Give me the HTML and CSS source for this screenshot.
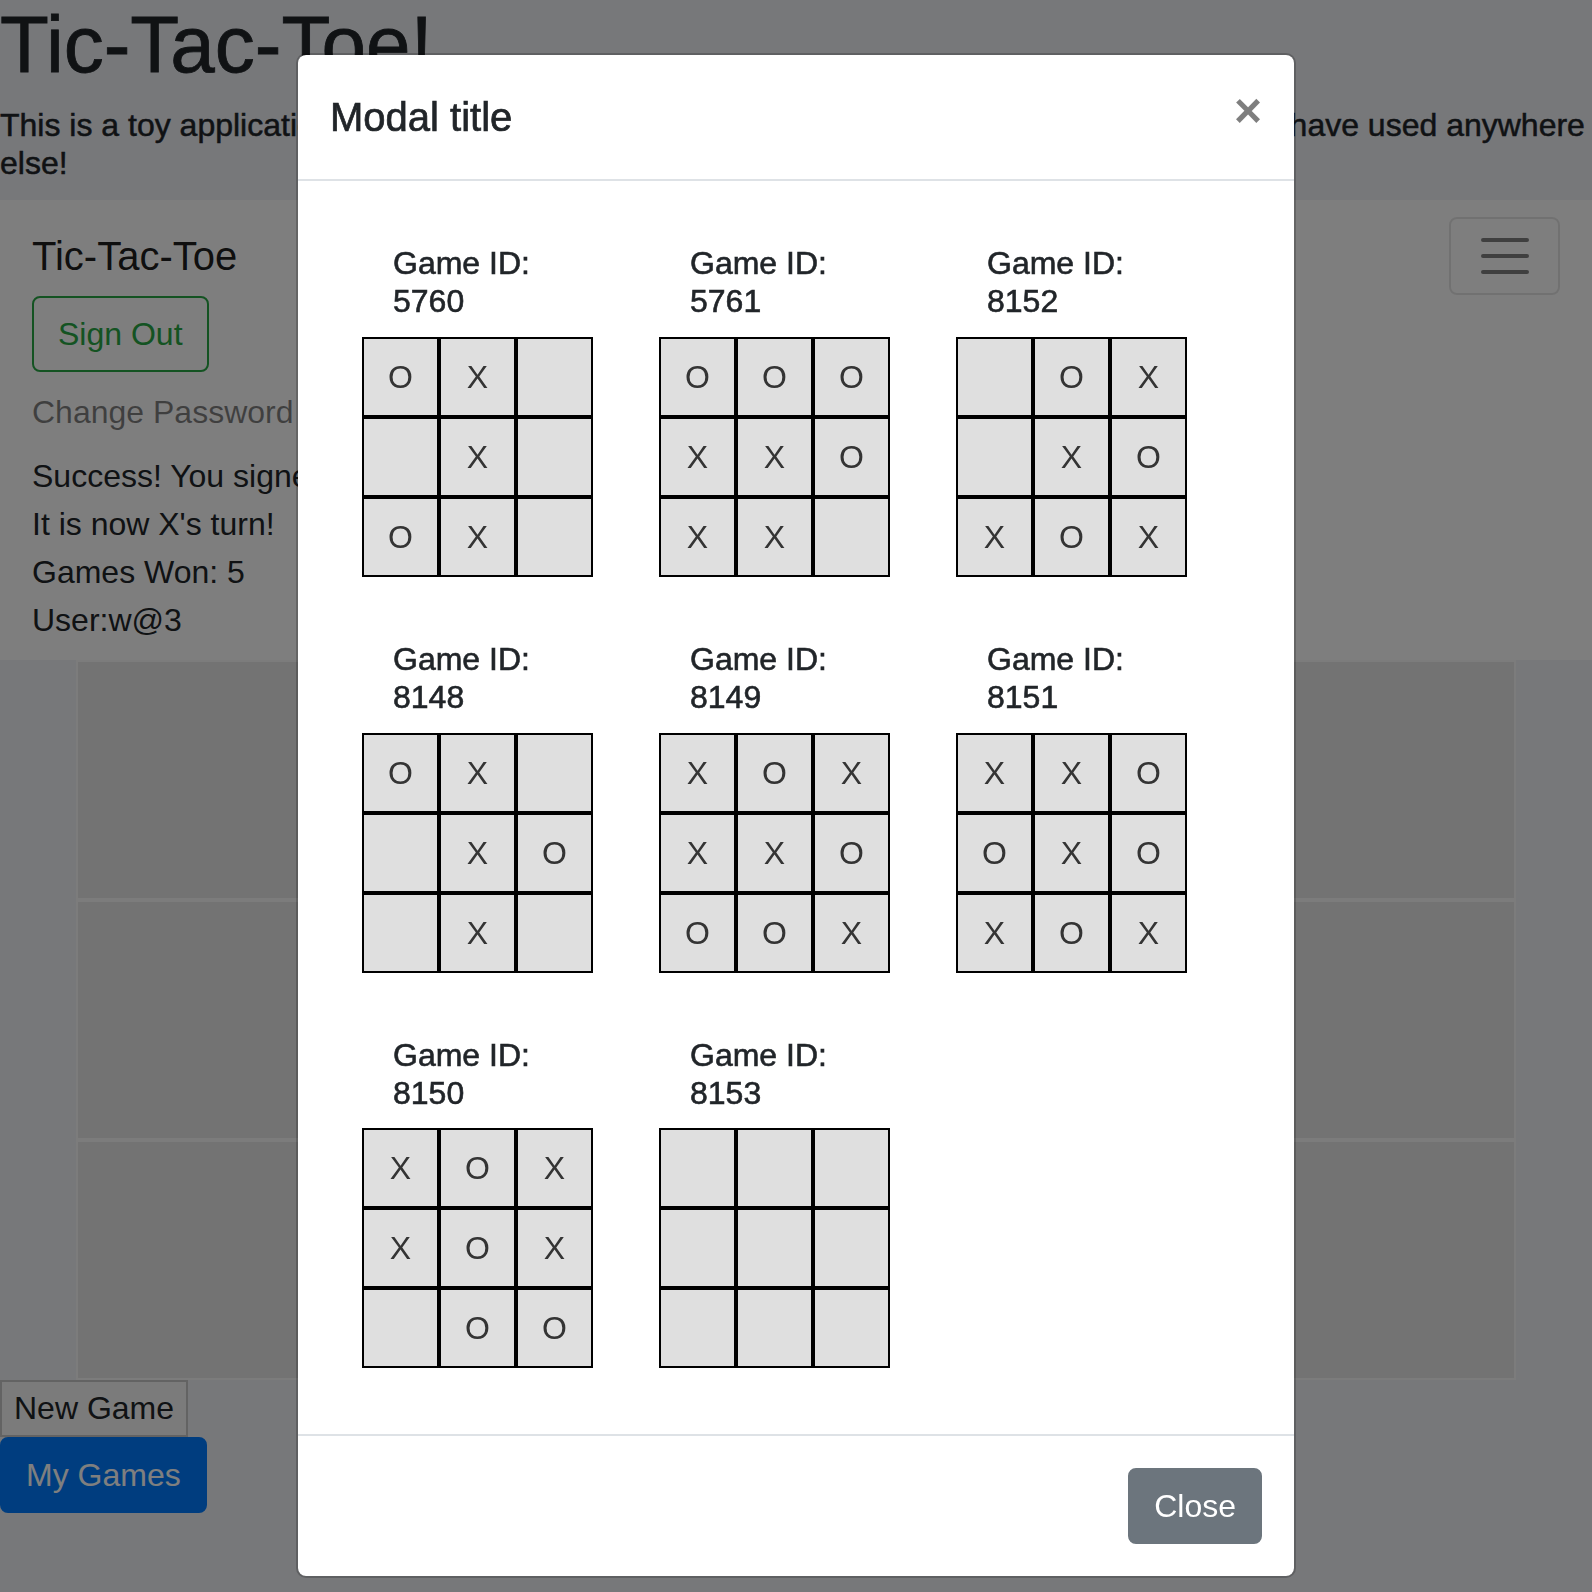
FILE: index.html
```html
<!DOCTYPE html>
<html lang="en">
<head>
<meta charset="utf-8">
<title>Tic-Tac-Toe</title>
<link rel="stylesheet" href="styles.css">
</head>
<body>
<div class="page">
  <header class="jumbotron">
    <h1 class="display-title">Tic-Tac-Toe!</h1>
    <h6 class="lead-text">This is a toy application made to practice web development skills and tools that I would not have used anywhere else!</h6>
  </header>

  <nav class="navbar">
    <div class="navbar-top">
      <span class="brand">Tic-Tac-Toe</span>
      <button class="toggler" type="button" aria-label="Toggle navigation">
        <svg class="toggler-icon" width="60" height="60" viewBox="0 0 30 30"><path d="M4 7h22M4 15h22M4 23h22" stroke="rgba(0,0,0,0.5)" stroke-width="2" stroke-linecap="round" fill="none"/></svg>
      </button>
    </div>
    <div class="navbar-collapse">
      <button class="btn btn-outline-success" type="button">Sign Out</button>
      <a class="nav-link">Change Password</a>
      <p class="status">Success! You signed in!</p>
      <p class="status">It is now X's turn!</p>
      <p class="status">Games Won: 5</p>
      <p class="status">User:w@3</p>
    </div>
  </nav>

  <div class="board">
    <div class="board-cell"></div><div class="board-cell"></div><div class="board-cell"></div>
    <div class="board-cell"></div><div class="board-cell"></div><div class="board-cell"></div>
    <div class="board-cell"></div><div class="board-cell"></div><div class="board-cell"></div>
  </div>

  <div class="actions">
    <button class="plain-btn" type="button">New Game</button>
    <button class="btn btn-primary" type="button">My Games</button>
  </div>
</div>

<div class="backdrop"></div>

<div class="modal">
  <div class="modal-dialog">
    <div class="modal-content">
      <div class="modal-header">
        <h5 class="modal-title">Modal title</h5>
        <button class="close" type="button" aria-label="Close">×</button>
      </div>
      <div class="modal-body">
        <div class="games">
          <div class="game">
            <h6 class="game-label">Game ID: 5760</h6>
            <div class="mini-board">
              <div class="mini-cell">O</div><div class="mini-cell">X</div><div class="mini-cell"></div>
              <div class="mini-cell"></div><div class="mini-cell">X</div><div class="mini-cell"></div>
              <div class="mini-cell">O</div><div class="mini-cell">X</div><div class="mini-cell"></div>
            </div>
          </div>
          <div class="game">
            <h6 class="game-label">Game ID: 5761</h6>
            <div class="mini-board">
              <div class="mini-cell">O</div><div class="mini-cell">O</div><div class="mini-cell">O</div>
              <div class="mini-cell">X</div><div class="mini-cell">X</div><div class="mini-cell">O</div>
              <div class="mini-cell">X</div><div class="mini-cell">X</div><div class="mini-cell"></div>
            </div>
          </div>
          <div class="game">
            <h6 class="game-label">Game ID: 8152</h6>
            <div class="mini-board">
              <div class="mini-cell"></div><div class="mini-cell">O</div><div class="mini-cell">X</div>
              <div class="mini-cell"></div><div class="mini-cell">X</div><div class="mini-cell">O</div>
              <div class="mini-cell">X</div><div class="mini-cell">O</div><div class="mini-cell">X</div>
            </div>
          </div>
          <div class="game">
            <h6 class="game-label">Game ID: 8148</h6>
            <div class="mini-board">
              <div class="mini-cell">O</div><div class="mini-cell">X</div><div class="mini-cell"></div>
              <div class="mini-cell"></div><div class="mini-cell">X</div><div class="mini-cell">O</div>
              <div class="mini-cell"></div><div class="mini-cell">X</div><div class="mini-cell"></div>
            </div>
          </div>
          <div class="game">
            <h6 class="game-label">Game ID: 8149</h6>
            <div class="mini-board">
              <div class="mini-cell">X</div><div class="mini-cell">O</div><div class="mini-cell">X</div>
              <div class="mini-cell">X</div><div class="mini-cell">X</div><div class="mini-cell">O</div>
              <div class="mini-cell">O</div><div class="mini-cell">O</div><div class="mini-cell">X</div>
            </div>
          </div>
          <div class="game">
            <h6 class="game-label">Game ID: 8151</h6>
            <div class="mini-board">
              <div class="mini-cell">X</div><div class="mini-cell">X</div><div class="mini-cell">O</div>
              <div class="mini-cell">O</div><div class="mini-cell">X</div><div class="mini-cell">O</div>
              <div class="mini-cell">X</div><div class="mini-cell">O</div><div class="mini-cell">X</div>
            </div>
          </div>
          <div class="game">
            <h6 class="game-label">Game ID: 8150</h6>
            <div class="mini-board">
              <div class="mini-cell">X</div><div class="mini-cell">O</div><div class="mini-cell">X</div>
              <div class="mini-cell">X</div><div class="mini-cell">O</div><div class="mini-cell">X</div>
              <div class="mini-cell"></div><div class="mini-cell">O</div><div class="mini-cell">O</div>
            </div>
          </div>
          <div class="game">
            <h6 class="game-label">Game ID: 8153</h6>
            <div class="mini-board">
              <div class="mini-cell"></div><div class="mini-cell"></div><div class="mini-cell"></div>
              <div class="mini-cell"></div><div class="mini-cell"></div><div class="mini-cell"></div>
              <div class="mini-cell"></div><div class="mini-cell"></div><div class="mini-cell"></div>
            </div>
          </div>
        </div>
      </div>
      <div class="modal-footer">
        <button class="btn btn-secondary" type="button">Close</button>
      </div>
    </div>
  </div>
</div>
</body>
</html>
```

FILE: styles.css
```css
* { box-sizing: border-box; }

html, body { margin: 0; padding: 0; }

body {
  font-family: "Liberation Sans", Arial, sans-serif;
  font-size: 32px;
  line-height: 48px;
  color: #212529;
  background: #eef0f5;
}

/* ---------- page behind the modal ---------- */
.jumbotron { padding: 0 0 1px; }

.display-title {
  margin: 0 0 16px;
  font-size: 80px;
  line-height: 90px;
  font-weight: 400;
  letter-spacing: 0;
  -webkit-text-stroke: 0.8px #212529;
}

.lead-text {
  margin: 0 0 16px;
  font-size: 32px;
  line-height: 38.4px;
  font-weight: 400;
  -webkit-text-stroke: 0.5px #212529;
}

.navbar {
  background: #fdfdfd;
  padding: 16px 32px;
}

.navbar-top {
  display: flex;
  align-items: center;
  justify-content: space-between;
}

.brand {
  font-size: 40px;
  line-height: 60px;
  padding: 10px 0;
  color: rgba(0, 0, 0, 0.9);
}

.toggler {
  width: 111px;
  height: 78px;
  padding: 0;
  border: 2px solid rgba(0, 0, 0, 0.1);
  border-radius: 8px;
  background: transparent;
  display: flex;
  align-items: center;
  justify-content: center;
}

.toggler-icon { display: block; }

.navbar-collapse {
  display: flex;
  flex-direction: column;
  align-items: flex-start;
}

.btn {
  font-family: inherit;
  font-size: 32px;
  line-height: 48px;
  padding: 12px 24px;
  border: 2px solid transparent;
  border-radius: 8px;
  background: transparent;
  cursor: pointer;
}

.btn-outline-success {
  color: #28a745;
  border-color: #28a745;
}

.nav-link {
  display: block;
  padding: 16px 0;
  color: rgba(0, 0, 0, 0.5);
}

.status { margin: 0; }

.board {
  display: grid;
  grid-template-columns: repeat(3, 480px);
  grid-auto-rows: 240px;
  margin: 0 76px;
}

.board-cell {
  background: #e6e6e6;
  border: 2px solid #f8f8f8;
}

.actions {
  display: flex;
  flex-direction: column;
  align-items: flex-start;
}

.plain-btn {
  font-family: inherit;
  font-size: 32px;
  line-height: 48px;
  padding: 2px 12px 3px;
  border: 2px solid #c6c6c6;
  background: #f7f7f7;
  color: #212529;
}

.btn-primary {
  color: #fff;
  background: #007bff;
  border-color: #007bff;
}

/* ---------- modal ---------- */
.backdrop {
  position: fixed;
  inset: 0;
  background: rgba(0, 0, 0, 0.5);
}

.modal {
  position: fixed;
  inset: 0;
  display: flex;
  justify-content: center;
  align-items: flex-start;
  padding-top: 53px;
}

.modal-dialog { width: 1000px; }

.modal-content {
  background: #fff;
  background-clip: padding-box;
  border: 2px solid rgba(0, 0, 0, 0.2);
  border-radius: 10px;
}

.modal-header {
  display: flex;
  align-items: flex-start;
  padding: 32px;
  border-bottom: 2px solid #dee2e6;
}

.modal-title {
  margin: 0;
  font-size: 40px;
  line-height: 60px;
  font-weight: 400;
  -webkit-text-stroke: 0.7px #212529;
}

.close {
  margin: -32px -32px -32px auto;
  padding: 32px;
  border: 0;
  background: transparent;
  font-family: inherit;
  font-size: 48px;
  font-weight: 700;
  line-height: 48px;
  color: #000;
  opacity: 0.5;
}

.modal-body { padding: 32px 32px 34px; }

.games {
  display: flex;
  flex-wrap: wrap;
}

.game {
  width: 297px;
  padding: 31px 32px 32px;
}

.game-label {
  width: 180px;
  margin: 0 0 16px 31px;
  font-size: 32px;
  line-height: 38.4px;
  font-weight: 400;
  -webkit-text-stroke: 0.6px #212529;
}

.mini-board {
  display: grid;
  grid-template-columns: repeat(3, 77px);
  grid-auto-rows: 80px;
  width: 231px;
}

.mini-cell {
  display: flex;
  align-items: center;
  justify-content: center;
  border: 2px solid #000;
  background: #dfdfdf;
  color: #343434;
  font-size: 32px;
  line-height: 1;
}

.modal-footer {
  display: flex;
  justify-content: flex-end;
  padding: 24px;
  border-top: 2px solid #dee2e6;
}

.btn-secondary {
  margin: 8px;
  color: #fff;
  background: #6c757d;
  border-color: #6c757d;
}
```
